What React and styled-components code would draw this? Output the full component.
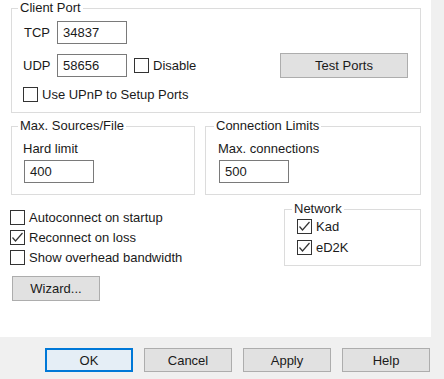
import React from "react";
import styled, { createGlobalStyle } from "styled-components";

const GlobalStyle = createGlobalStyle`
  html, body { margin: 0; padding: 0; }
  body {
    font-family: "Liberation Sans", Arial, sans-serif;
    font-size: 13px;
    color: #1a1a1a;
  }
  * { box-sizing: border-box; }
`;

const Window = styled.div`
  width: 444px;
  height: 379px;
  display: flex;
  flex-direction: column;
  background: #f0f0f0;
  overflow: hidden;
`;

const Body = styled.div`
  display: flex;
  height: 337px;
  flex: none;
`;

const Page = styled.div`
  width: 431px;
  background: #fff;
  padding: 1px 10px 0 10px;
  display: flex;
  flex-direction: column;
`;

const Group = styled.fieldset`
  margin: ${(p) => p.$mt || 0}px 0 0 ${(p) => (p.$ml ?? 1)}px;
  padding: 0;
  min-width: 0;
  border: 1px solid #dcdcdc;
  width: ${(p) => p.$w}px;
  flex: none;
`;

const Legend = styled.legend`
  padding: 0 2px;
  margin-left: ${(p) => p.$indent ?? 6}px;
  line-height: 14px;
  font-size: 13px;
`;

const ClientGrid = styled.div`
  display: grid;
  grid-template-columns: 1fr auto;
  row-gap: 9px;
  align-items: center;
  padding: 6px 12px 10px 11px;
`;

const FieldRow = styled.div`
  grid-column: 1;
  grid-row: ${(p) => p.$row};
  display: flex;
  align-items: center;
  height: 23px;
`;

const FieldLabel = styled.span`
  width: 34px;
  padding-left: ${(p) => p.$pl || 0}px;
`;

const TextBox = styled.div`
  width: ${(p) => p.$w || 70}px;
  height: 23px;
  border: 1px solid #7a7a7a;
  background: #fff;
  padding-left: 5px;
  display: flex;
  align-items: center;
  margin-left: ${(p) => p.$ml || 0}px;
`;

const CheckLine = styled.label`
  display: flex;
  align-items: center;
  gap: 4px;
  height: 15px;
  margin-left: ${(p) => p.$ml || 0}px;
  white-space: nowrap;
`;

const Box = styled.span`
  width: 15px;
  height: 15px;
  border: 1px solid #333;
  background: #fff;
  flex: none;
  display: flex;
  align-items: center;
  justify-content: center;
`;

const Button = styled.button`
  font-family: inherit;
  font-size: 13px;
  color: #1a1a1a;
  width: ${(p) => p.$w || 88}px;
  height: ${(p) => p.$h || 24}px;
  background: #e1e1e1;
  border: 1px solid #adadad;
  padding: 0;
  margin: 0;
  ${(p) =>
    p.$default &&
    `border-color: #0078d7; box-shadow: inset 0 0 0 1px #0078d7; background: #e5eef6;`}
`;

const TestPortsButton = styled(Button)`
  grid-column: 2;
  grid-row: 2;
  width: 128px;
  height: 25px;
`;

const UpnpRow = styled.div`
  grid-column: 1 / span 2;
  grid-row: 3;
`;

const Row = styled.div`
  display: flex;
  gap: 10px;
  margin-top: ${(p) => p.$mt || 0}px;
`;

const LimitBody = styled.div`
  padding: 8px 12px 11px ${(p) => p.$pl || 11}px;
  display: flex;
  flex-direction: column;
  gap: 4px;
`;

const LimitLabel = styled.div`
  line-height: 15px;
  height: 15px;
`;

const BottomArea = styled.div`
  display: flex;
  justify-content: space-between;
  align-items: flex-start;
`;

const OptionsColumn = styled.div`
  display: flex;
  flex-direction: column;
  gap: 5px;
  padding-top: 15px;
`;

const WizardButton = styled(Button)`
  margin: 6px 0 0 2px;
  height: 25px;
`;

const NetworkBody = styled.div`
  display: flex;
  flex-direction: column;
  gap: 6px;
  padding: 3px 10px 10px 12px;
`;

const Footer = styled.div`
  flex: 1;
  display: flex;
  justify-content: flex-end;
  align-items: flex-start;
  gap: 11px;
  padding: 11px 14px 0 0;
`;

const Check = ({ checked }) => (
  <Box>
    {checked && (
      <svg width="13" height="13" viewBox="0 0 13 13">
        <polyline
          points="1.5,6.5 4.5,10 11.5,2"
          fill="none"
          stroke="#333"
          strokeWidth="1.2"
        />
      </svg>
    )}
  </Box>
);

const CheckItem = ({ checked, children, ml }) => (
  <CheckLine $ml={ml}>
    <Check checked={checked} />
    <span>{children}</span>
  </CheckLine>
);

export default function App() {
  return (
    <Window>
      <GlobalStyle />
      <Body>
        <Page>
          <Group $w={410}>
            <Legend $indent={6}>Client Port</Legend>
            <ClientGrid>
              <FieldRow $row={1}>
                <FieldLabel $pl={1}>TCP</FieldLabel>
                <TextBox>34837</TextBox>
              </FieldRow>
              <FieldRow $row={2}>
                <FieldLabel>UDP</FieldLabel>
                <TextBox>58656</TextBox>
                <CheckItem ml={7}>Disable</CheckItem>
              </FieldRow>
              <TestPortsButton>Test Ports</TestPortsButton>
              <UpnpRow>
                <CheckItem>Use UPnP to Setup Ports</CheckItem>
              </UpnpRow>
            </ClientGrid>
          </Group>

          <Row $mt={6}>
            <Group $w={184}>
              <Legend $indent={6}>Max. Sources/File</Legend>
              <LimitBody $pl={11}>
                <LimitLabel>Hard limit</LimitLabel>
                <TextBox $ml={1}>400</TextBox>
              </LimitBody>
            </Group>
            <Group $w={216} $ml={0}>
              <Legend $indent={8}>Connection Limits</Legend>
              <LimitBody $pl={12}>
                <LimitLabel>Max. connections</LimitLabel>
                <TextBox $ml={1}>500</TextBox>
              </LimitBody>
            </Group>
          </Row>

          <BottomArea>
            <OptionsColumn>
              <CheckItem>Autoconnect on startup</CheckItem>
              <CheckItem checked>Reconnect on loss</CheckItem>
              <CheckItem>Show overhead bandwidth</CheckItem>
              <WizardButton>Wizard...</WizardButton>
            </OptionsColumn>
            <Group $w={137} $mt={7} $ml={0}>
              <Legend $indent={7}>Network</Legend>
              <NetworkBody>
                <CheckItem checked>Kad</CheckItem>
                <CheckItem checked>eD2K</CheckItem>
              </NetworkBody>
            </Group>
          </BottomArea>
        </Page>
      </Body>
      <Footer>
        <Button $default>OK</Button>
        <Button>Cancel</Button>
        <Button>Apply</Button>
        <Button>Help</Button>
      </Footer>
    </Window>
  );
}
